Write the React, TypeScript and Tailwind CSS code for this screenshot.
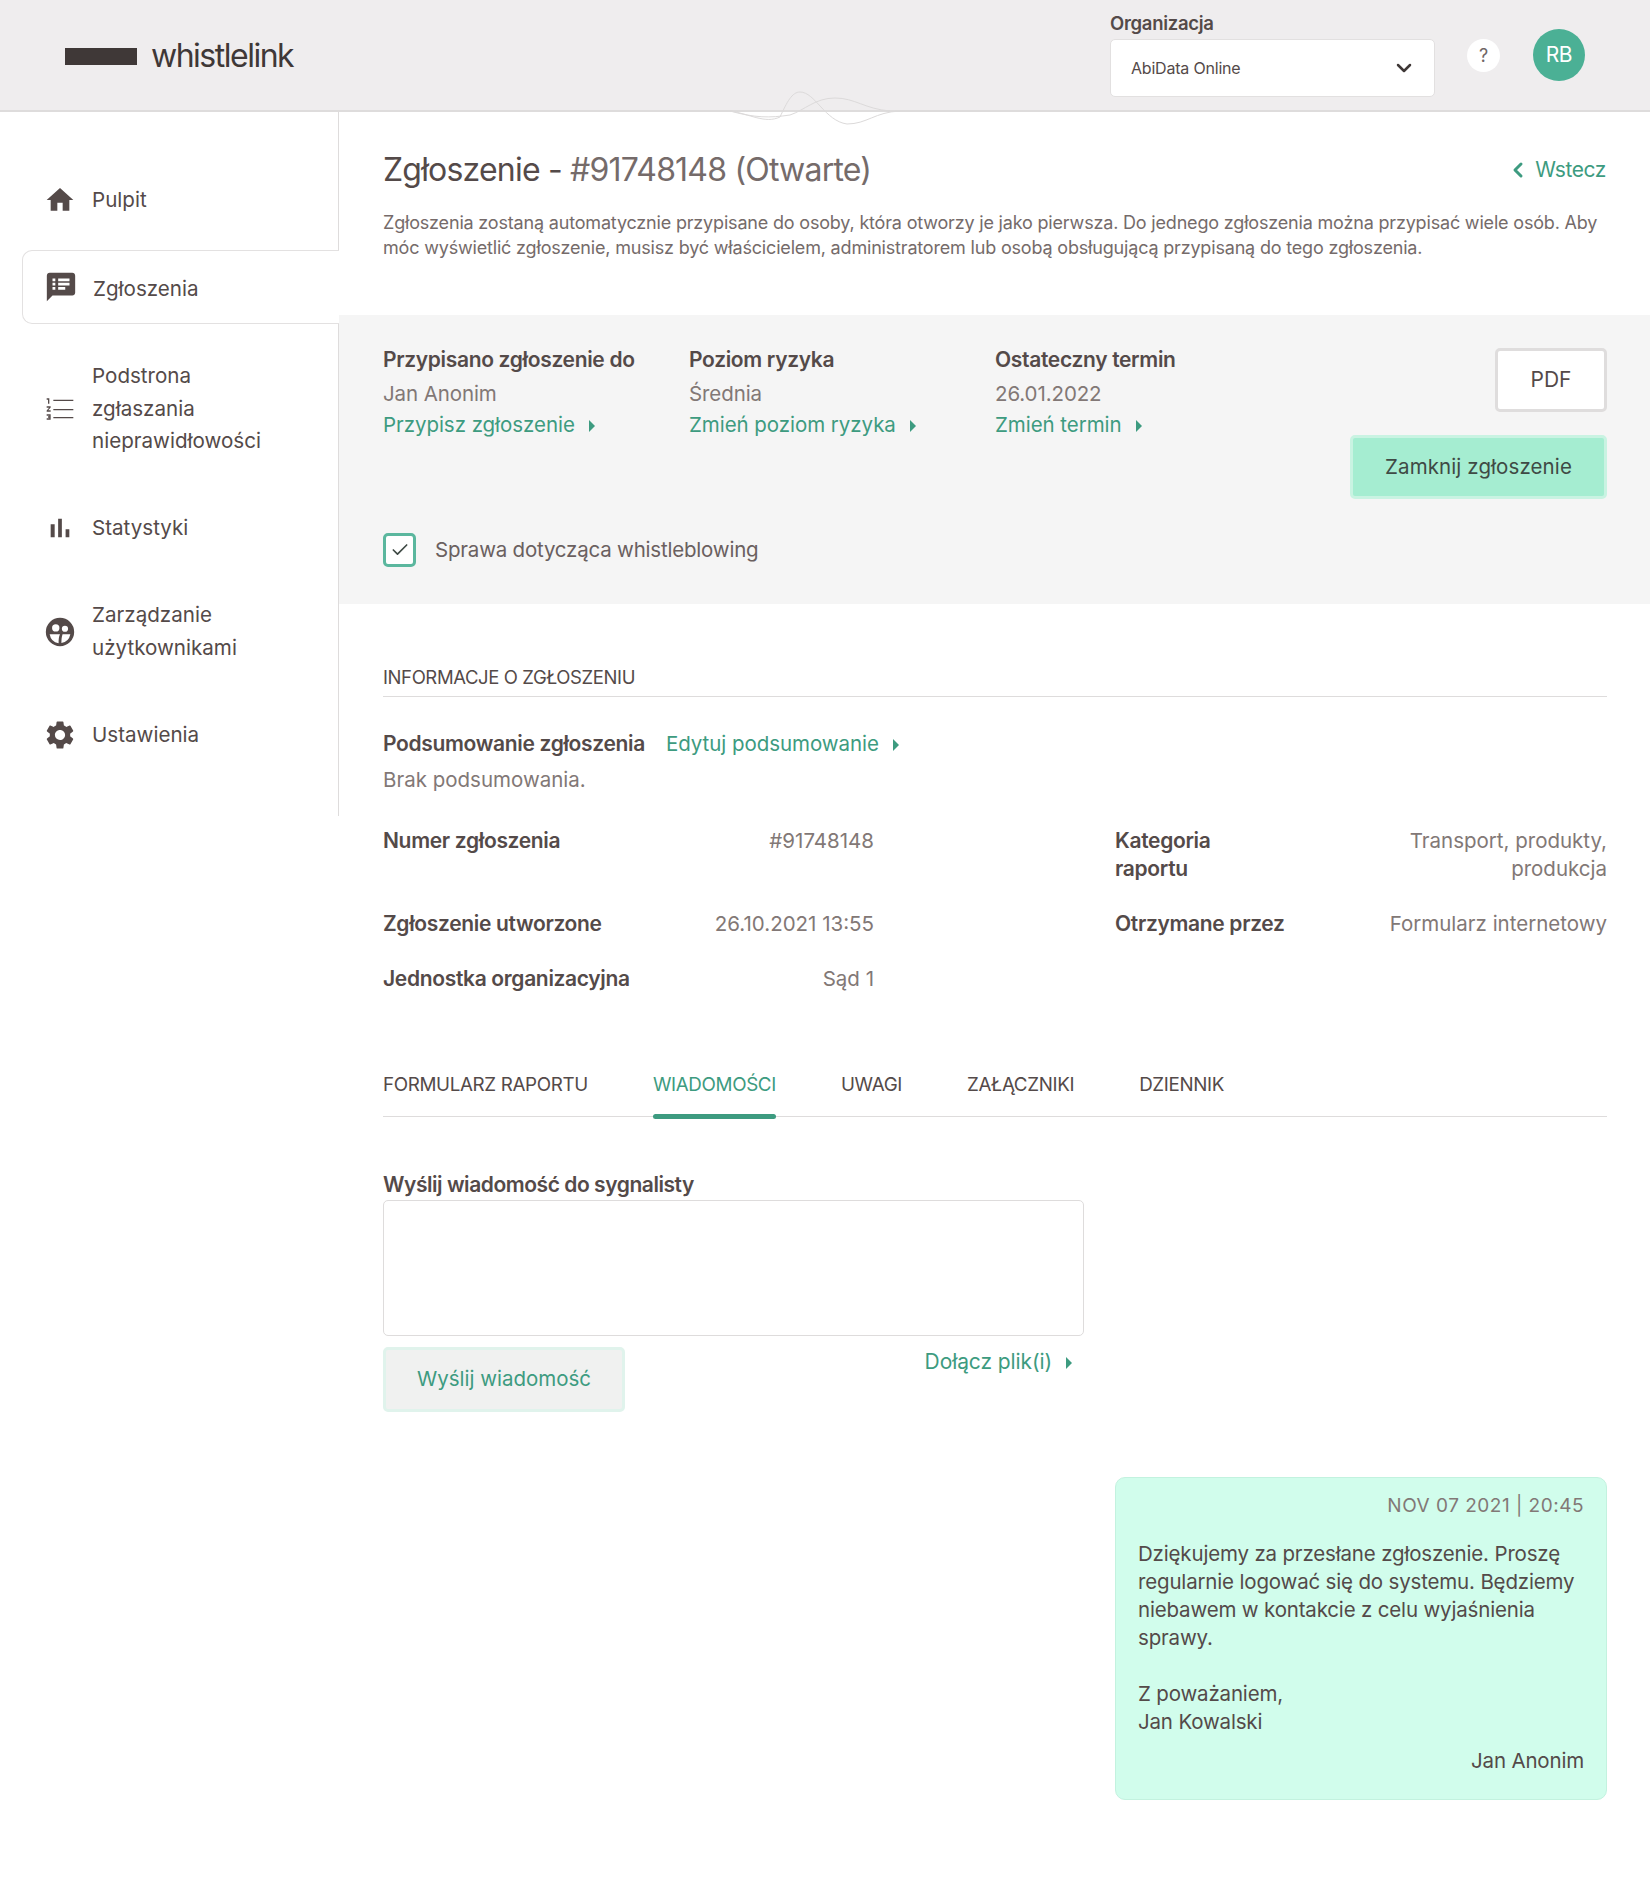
import { ChevronDown, ChevronLeft, Check } from 'lucide-react'

const font = { fontFamily: 'Inter, sans-serif' }

function Caret() {
  return (
    <svg viewBox="0 0 8 14" className="ml-[13px] inline-block h-[14px] w-[8px] fill-[#3d9b80]">
      <path d="M1 1 L7 7 L1 13 Z" />
    </svg>
  )
}

function GreenLink({ text, className = '' }: { text: string; className?: string }) {
  return (
    <a className={`text-[20.5px] leading-[28px] tracking-[-0.05px] text-[#3d9b80] whitespace-nowrap ${className}`}>
      {text}
      <Caret />
    </a>
  )
}

function HomeIcon() {
  return (
    <svg viewBox="0 0 24 24" className="h-[32px] w-[32px] fill-[#544a49]">
      <path d="M10 20v-6h4v6h5v-8h3L12 3 2 12h3v8z" />
    </svg>
  )
}
function ReportIcon() {
  return (
    <svg viewBox="0 0 24 24" className="h-[34px] w-[34px] fill-[#544a49]">
      <path d="M20 2H4c-1.1 0-2 .9-2 2v18l4-4h14c1.1 0 2-.9 2-2V4c0-1.100-.9-2-2-2zM8 14H6v-2h2v2zm0-3H6V9h2v2zm0-3H6V6h2v2zm7 6h-5v-2h5v2zm3-3h-8V9h8v2zm0-3h-8V6h8v2z" />
    </svg>
  )
}
function ListIcon() {
  return (
    <svg viewBox="0 0 24 24" className="h-[32px] w-[32px] fill-[#544a49]">
      <path d="M2 17h2v.5H3v1h1v.5H2v1h3v-4H2v1zm1-9h1V4H2v1h1v3zm-1 3h1.800L2 13.100v.9h3v-1H3.200L5 10.900V10H2v1zm5-6v1h15V5H7zm0 14h15v-1H7v1zm0-6h15v-1H7v1z" />
    </svg>
  )
}
function BarsIcon() {
  return (
    <svg viewBox="0 0 24 24" className="h-[32px] w-[32px] fill-[#544a49]">
      <path d="M5 9.200h3V19H5zM10.600 5h2.800v14h-2.800zm5.600 8H19v6h-2.800z" />
    </svg>
  )
}
function UsersIcon() {
  return (
    <svg viewBox="0 0 24 24" className="h-[34px] w-[34px] fill-[#544a49]">
      <path
        fillRule="evenodd"
        d="M12 2a10 10 0 1 0 0 20 10 10 0 0 0 0-20zM9 6.500a2.600 2.600 0 1 1 0 5.200 2.600 2.600 0 0 1 0-5.200zM15.500 7.500a2.200 2.200 0 1 1 0 4.400 2.200 2.200 0 0 1 0-4.400zM4.700 13.500h7.300c-.8 1.500-1 3.500-1 6.500a8 8 0 0 1-6.300-6.500zM13.800 13.500h5.500a8 8 0 0 1-6.300 6.300c0-2.500.2-4.500.8-6.300z"
      />
    </svg>
  )
}
function GearIcon() {
  return (
    <svg viewBox="0 0 24 24" className="h-[34px] w-[34px] fill-[#544a49]">
      <path d="M19.140 12.940c.04-.3.060-.61.060-.94 0-.32-.02-.64-.07-.94l2.030-1.580a.49.49 0 0 0 .12-.61l-1.920-3.320a.488.488 0 0 0-.59-.22l-2.390.96c-.5-.38-1.030-.7-1.620-.94l-.36-2.540a.484.484 0 0 0-.48-.41h-3.840c-.24 0-.43.170-.47.410l-.36 2.540c-.59.240-1.130.570-1.620.94l-2.390-.96c-.22-.08-.47 0-.59.220L2.740 8.870c-.12.210-.08.470.12.610l2.030 1.580c-.05.300-.09.630-.09.940s.02.640.07.940l-2.030 1.580a.49.49 0 0 0-.12.610l1.920 3.320c.12.220.37.290.59.220l2.390-.96c.5.380 1.030.7 1.620.94l.36 2.540c.05.240.24.410.48.410h3.840c.24 0 .44-.17.47-.41l.36-2.540c.59-.24 1.130-.56 1.620-.94l2.390.96c.22.080.47 0 .59-.22l1.920-3.320c.12-.22.070-.47-.12-.61l-2.010-1.580zM12 15.600A3.610 3.610 0 0 1 8.400 12c0-1.980 1.620-3.600 3.600-3.600s3.600 1.620 3.600 3.600-1.620 3.600-3.600 3.600z" />
    </svg>
  )
}

function Header() {
  return (
    <header className="relative flex h-[112px] items-center justify-between border-b-2 border-[#dedcdc] bg-[#efedee] pl-[65px] pr-[65px]">
      <div className="flex items-center gap-[14px] pt-[2px]">
        <div className="h-[17px] w-[72px] bg-[#3f3837]" />
        <span className="text-[32px] tracking-[-1.5px] text-[#3f3837]">whistlelink</span>
      </div>
      <div className="flex items-center">
        <div className="flex w-[325px] flex-col pb-[3px]">
          <span className="mb-[4px] text-[18.5px] leading-[24px] font-semibold tracking-[-0.3px] text-[#544a49]">Organizacja</span>
          <div className="flex h-[58px] items-center justify-between rounded-[5px] border border-[#e2e0e0] bg-white pl-[20px] pr-[18px]">
            <span className="text-[16px] tracking-[-0.2px] text-[#544a49]">AbiData Online</span>
            <ChevronDown className="h-[24px] w-[24px] text-[#3f3837]" strokeWidth={2.5} />
          </div>
        </div>
        <div className="ml-[32px] flex h-[33px] w-[33px] items-center justify-center rounded-full bg-white text-[18px] text-[#6f6665]">?</div>
        <div className="ml-[33px] flex h-[52px] w-[52px] items-center justify-center rounded-full bg-[#4bb095] text-[21px] tracking-[-0.5px] text-white">RB</div>
      </div>
      <svg viewBox="0 0 420 48" className="absolute left-[600px] top-[88px] h-[48px] w-[420px] fill-none stroke-[#dcdada]" strokeWidth="1">
        <path d="M60 23 H 130 C 150 26 165 36 180 29 C 187 14 192 4 200 4 C 215 4 225 33 247 36 C 267 36 275 24 300 23 H 390" />
        <path d="M130 23 C 155 30 170 30 190 27 C 205 22 215 10 235 10 C 255 10 265 21 290 23" />
      </svg>
    </header>
  )
}

function NavItem({ icon, children, active }: { icon: React.ReactNode; children: React.ReactNode; active?: boolean }) {
  return (
    <div
      className={`flex items-center gap-[15px] pl-[43px] ${
        active ? 'relative -mr-px h-[74px] ml-[22px] rounded-l-[10px] border border-r-0 border-[#e3e1e1] bg-white !pl-[21px]' : ''
      }`}
    >
      <div className="flex w-[34px] justify-center">{icon}</div>
      <div className={`text-[20.6px] leading-[32.500px] text-[#544a49] ${active ? 'pt-[4px]' : ''}`}>{children}</div>
    </div>
  )
}

function Sidebar() {
  return (
    <aside className="h-[704px] w-[339px] shrink-0 border-r border-[#dedcdc] pt-[59px]">
      <div className="flex h-[58px] items-center"><NavItem icon={<HomeIcon />}>Pulpit</NavItem></div>
      <div className="mt-[21px]"><NavItem icon={<ReportIcon />} active>Zgłoszenia</NavItem></div>
      <div className="mt-[36px]"><NavItem icon={<ListIcon />}>Podstrona<br />zgłaszania<br />nieprawidłowości</NavItem></div>
      <div className="mt-[54px]"><NavItem icon={<BarsIcon />}>Statystyki</NavItem></div>
      <div className="mt-[55px]"><NavItem icon={<UsersIcon />}>Zarządzanie<br />użytkownikami</NavItem></div>
      <div className="mt-[54px]"><NavItem icon={<GearIcon />}>Ustawienia</NavItem></div>
    </aside>
  )
}

function InfoCol({ label, value, link }: { label: string; value: string; link: string }) {
  return (
    <div className="w-[306px]">
      <div className="text-[21px] leading-[32px] font-semibold tracking-[-0.33px] text-[#544a49]">{label}</div>
      <div className="mt-[2px] mb-[1px] text-[20.5px] leading-[32px] tracking-[-0.1px] text-[#827876]">{value}</div>
      <GreenLink text={link} />
    </div>
  )
}

function DetailRow({ label, value, className = '' }: { label: React.ReactNode; value: React.ReactNode; className?: string }) {
  return (
    <div className={`flex justify-between leading-[28px] ${className}`}>
      <span className="text-[21px] font-semibold tracking-[-0.33px] text-[#544a49]">{label}</span>
      <span className="text-right text-[20.5px] text-[#827876]">{value}</span>
    </div>
  )
}

export default function App() {
  return (
    <div className="h-[1886px] w-[1650px] bg-white" style={font}>
      <Header />
      <div className="flex">
        <Sidebar />
        <main className="min-w-0 flex-1">
          <div className="flex h-[203px] flex-col px-[44px] pt-[32px]">
            <div className="flex items-center justify-between">
              <h1 className="text-[32px] leading-[52px] tracking-[-0.8px] text-[#544a49]">
                Zgłoszenie - <span className="text-[#756b6a]">#91748148 (Otwarte)</span>
              </h1>
              <a className="flex items-center text-[21px] tracking-[-0.4px] text-[#3d9b80]">
                <ChevronLeft className="mr-[5px] h-[24px] w-[24px]" strokeWidth={3} />
                Wstecz
              </a>
            </div>
            <p className="mt-[14px] text-[18px] leading-[25px] tracking-[-0.18px] text-[#756b6a]">
              Zgłoszenia zostaną automatycznie przypisane do osoby, która otworzy je jako pierwsza. Do jednego zgłoszenia można przypisać wiele osób. Aby móc wyświetlić zgłoszenie, musisz być właścicielem, administratorem lub osobą obsługującą przypisaną do tego zgłoszenia.
            </p>
          </div>

          <section className="h-[289px] bg-[#f5f5f5] pl-[44px] pr-[43px] pt-[29px]">
            <div className="flex justify-between">
              <div className="flex">
                <InfoCol label="Przypisano zgłoszenie do" value="Jan Anonim" link="Przypisz zgłoszenie" />
                <InfoCol label="Poziom ryzyka" value="Średnia" link="Zmień poziom ryzyka" />
                <InfoCol label="Ostateczny termin" value="26.01.2022" link="Zmień termin" />
              </div>
              <div className="flex flex-col items-end gap-[23px] pt-[4px]">
                <button className="h-[64px] w-[112px] rounded-[5px] border-[3px] border-[#dfdddd] bg-white text-[21px] text-[#544a49]">PDF</button>
                <button className="h-[64px] w-[257px] rounded-[5px] border-[3px] border-[#c9f3e2] bg-[#a5edd1] text-[20.5px] tracking-[0.1px] text-[#3f4a45]">Zamknij zgłoszenie</button>
              </div>
            </div>
            <div className="mt-[34px] flex items-center gap-[19px]">
              <div className="flex h-[34px] w-[33px] items-center justify-center rounded-[5px] border-[3px] border-[#5bb79e] bg-white">
                <Check className="h-[20px] w-[20px] text-[#3f4a45]" strokeWidth={2} />
              </div>
              <span className="text-[20.5px] tracking-[-0.2px] text-[#6a605f]">Sprawa dotycząca whistleblowing</span>
            </div>
          </section>

          <div className="pl-[44px] pr-[43px] pt-[61px]">
            <div className="border-b border-[#dedcdc] pb-[6px] text-[18.500px] leading-[25px] tracking-[-0.4px] text-[#544a49]">INFORMACJE O ZGŁOSZENIU</div>

            <div className="mt-[32px] flex items-center gap-[21px] leading-[30px]">
              <span className="text-[21px] font-semibold tracking-[-0.33px] text-[#544a49]">Podsumowanie zgłoszenia</span>
              <GreenLink text="Edytuj podsumowanie" />
            </div>
            <div className="mt-[6px] text-[20.5px] leading-[30px] text-[#827876]">Brak podsumowania.</div>

            <div className="mt-[32px] grid grid-cols-[491px_492px] justify-between">
              <div>
                <DetailRow label="Numer zgłoszenia" value="#91748148" />
                <DetailRow className="mt-[55px]" label="Zgłoszenie utworzone" value="26.10.2021 13:55" />
                <DetailRow className="mt-[27px]" label="Jednostka organizacyjna" value="Sąd 1" />
              </div>
              <div>
                <DetailRow label={<>Kategoria<br />raportu</>} value={<>Transport, produkty,<br />produkcja</>} />
                <DetailRow className="mt-[27px]" label="Otrzymane przez" value="Formularz internetowy" />
              </div>
            </div>

            <nav className="mt-[71px] flex h-[53px] gap-[65px] border-b border-[#dedcdc] pt-[8px] text-[18.8px] leading-[25px] tracking-[-0.35px] text-[#544a49]">
              <span>FORMULARZ RAPORTU</span>
              <span className="relative h-[47px] text-[#3d9b80]">
                WIADOMOŚCI
                <span className="absolute bottom-0 left-0 h-[5px] w-full rounded-[3px] bg-[#3d9b80]" />
              </span>
              <span>UWAGI</span>
              <span>ZAŁĄCZNIKI</span>
              <span>DZIENNIK</span>
            </nav>

            <div className="mt-[54px] w-[701px]">
              <div className="text-[21px] leading-[28px] font-semibold tracking-[-0.45px] text-[#544a49]">Wyślij wiadomość do sygnalisty</div>
              <textarea className="mt-[1px] block h-[136px] w-full resize-none rounded-[5px] border border-[#dedcdc] bg-white" />
              <div className="mt-[11px] flex items-start justify-between pr-[11px]">
                <button className="h-[65px] w-[242px] rounded-[5px] border-[3px] border-[#e0f3ec] bg-[#f0f1f0] text-[20.5px] text-[#3d9b80]">Wyślij wiadomość</button>
                <GreenLink text="Dołącz plik(i)" className="!text-[21px] !tracking-[-0.1px] pt-[1px]" />
              </div>
            </div>

            <div className="mt-[65px] flex justify-end">
              <div className="h-[323px] w-[492px] rounded-[10px] border border-[#c3f2df] bg-[#d1fdec] px-[22px] pt-[14px]">
                <div className="text-right text-[19px] leading-[28px] tracking-[0.5px] text-[#827876]">NOV 07 2021 | 20:45</div>
                <p className="mt-[20px] text-[20.5px] leading-[28px] tracking-[-0.17px] text-[#544a49]">
                  Dziękujemy za przesłane zgłoszenie. Proszę regularnie logować się do systemu. Będziemy niebawem w kontakcie z celu wyjaśnienia sprawy.
                  <br />
                  <br />
                  Z poważaniem,
                  <br />
                  Jan Kowalski
                </p>
                <div className="mt-[11px] text-right text-[20.5px] leading-[28px] tracking-[-0.17px] text-[#544a49]">Jan Anonim</div>
              </div>
            </div>
          </div>
        </main>
      </div>
    </div>
  )
}
